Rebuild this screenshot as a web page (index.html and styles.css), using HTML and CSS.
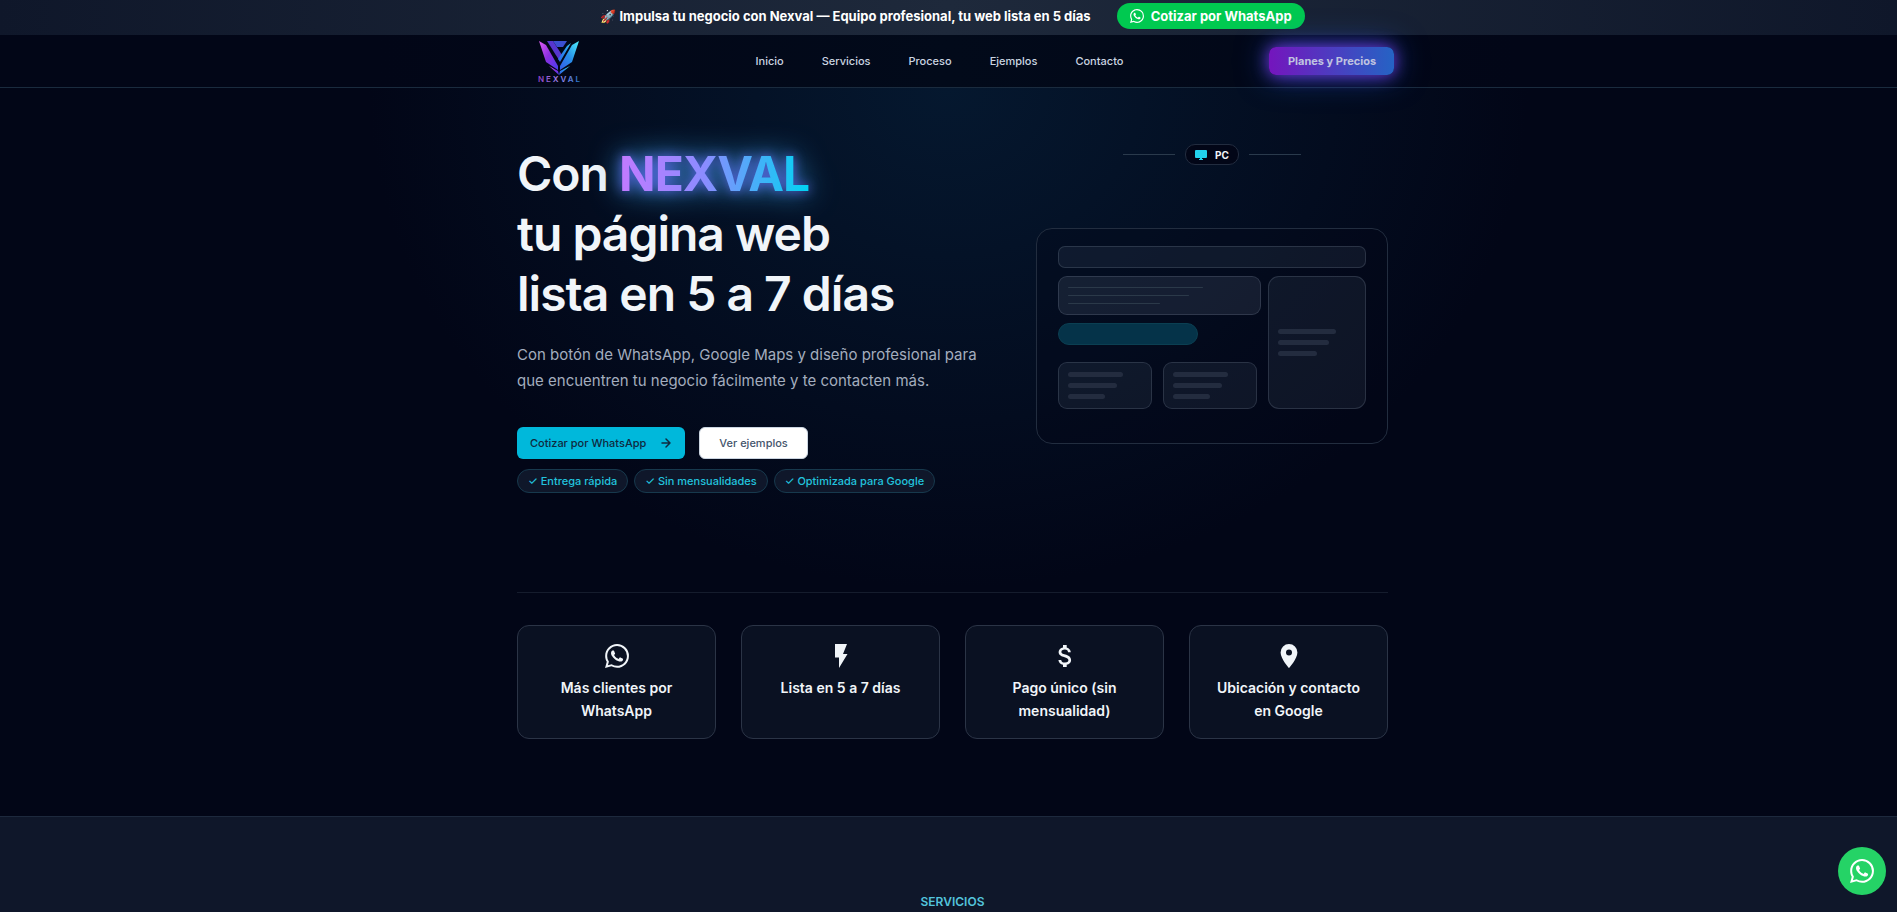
FILE: index.html
```
<!DOCTYPE html>
<html lang="es">
<head>
    <meta charset="UTF-8">
    <meta name="viewport" content="width=device-width, initial-scale=1.0">
    <title>Nexval</title>
    <link rel="stylesheet" href="styles.css">
</head>
<body>
    <svg class="sprite" aria-hidden="true">
        <symbol id="whatsapp" viewBox="0 0 24 24">
            <path d="M17.47 14.38c-.3-.15-1.76-.87-2.03-.97-.27-.1-.47-.15-.67.15-.2.3-.77.97-.94 1.16-.17.2-.35.22-.64.08-.3-.15-1.26-.46-2.39-1.48-.88-.79-1.48-1.76-1.65-2.06-.17-.3-.02-.46.13-.6.13-.14.3-.35.44-.53.15-.17.2-.3.3-.5.1-.2.05-.37-.02-.52-.08-.15-.67-1.61-.92-2.2-.24-.59-.49-.5-.67-.51h-.57c-.2 0-.52.07-.79.37-.27.3-1.04 1.02-1.04 2.48s1.06 2.87 1.21 3.07c.15.2 2.1 3.2 5.08 4.49.71.3 1.26.49 1.69.63.71.22 1.36.19 1.87.12.57-.09 1.76-.72 2.01-1.42.25-.69.25-1.29.17-1.41-.07-.12-.27-.2-.57-.35M12.05 21.79h0a9.87 9.87 0 0 1-5.03-1.38l-.36-.21-3.74.98 1-3.65-.24-.37a9.86 9.86 0 0 1-1.51-5.26c0-5.45 4.44-9.88 9.89-9.88a9.82 9.82 0 0 1 6.99 2.9 9.83 9.83 0 0 1 2.89 6.99c0 5.45-4.44 9.88-9.89 9.88m8.41-18.3A11.82 11.82 0 0 0 12.05 0C5.5 0 .16 5.34.16 11.89c0 2.1.55 4.14 1.59 5.95L.06 24l6.3-1.65a11.88 11.88 0 0 0 5.68 1.45h.01c6.55 0 11.89-5.34 11.89-11.9a11.82 11.82 0 0 0-3.48-8.41Z"/>
        </symbol>
    </svg>

    <div class="topbar">
        <p>🚀 Impulsa tu negocio con Nexval — Equipo profesional, tu web lista en 5 días</p>
        <a href="#contacto" class="topbar-btn"><svg><use href="#whatsapp"/></svg>Cotizar por WhatsApp</a>
    </div>

    <header class="header">
        <div class="header-inner">
            <a href="#inicio" class="logo">
                <svg viewBox="0 0 48 44" role="img" aria-label="Nexval">
                    <defs>
                        <linearGradient id="logo-left" x1="0" y1="0" x2="1" y2="1">
                            <stop offset="0" stop-color="#e05cf5"/>
                            <stop offset="0.5" stop-color="#8b2fe0"/>
                            <stop offset="1" stop-color="#4a3df0"/>
                        </linearGradient>
                        <linearGradient id="logo-right" x1="1" y1="0" x2="0" y2="1">
                            <stop offset="0" stop-color="#4df0fa"/>
                            <stop offset="0.5" stop-color="#2790ea"/>
                            <stop offset="1" stop-color="#3657e8"/>
                        </linearGradient>
                        <linearGradient id="logo-text" x1="0" y1="0" x2="1" y2="0">
                            <stop offset="0" stop-color="#8d3cc0"/>
                            <stop offset="0.5" stop-color="#a18af0"/>
                            <stop offset="1" stop-color="#1576c8"/>
                        </linearGradient>
                    </defs>
                    <path fill="url(#logo-left)" d="M4 2l7 4 12 21v4L11 23z"/>
                    <path fill="#5636cf" d="M12 2h6l9 14-3 5z"/>
                    <path fill="#3b4fd0" d="M18 2h14l-4 6h-6z"/>
                    <path fill="url(#logo-right)" d="M44 2l-7 21-12 8v-4L37 6zM36 4L25 23l-2-3L32 7z"/>
                    <path fill="url(#logo-left)" d="M14 27l9 5 1 4z"/>
                    <path fill="url(#logo-right)" d="M35 27l-10 5-1 4z"/>
                    <text x="25" y="43" text-anchor="middle" class="logo-name" fill="url(#logo-text)">NEXVAL</text>
                </svg>
            </a>
            <nav class="nav">
                <a href="#inicio">Inicio</a>
                <a href="#servicios">Servicios</a>
                <a href="#proceso">Proceso</a>
                <a href="#ejemplos">Ejemplos</a>
                <a href="#contacto">Contacto</a>
            </nav>
            <a href="#planes" class="plans-btn">Planes y Precios</a>
        </div>
    </header>

    <main>
        <section class="hero" id="inicio">
            <div class="container">
                <div class="hero-grid">
                    <div class="hero-copy">
                        <h1>Con <span class="brand">NEXVAL</span><br>tu página web<br>lista en 5 a 7 días</h1>
                        <p class="lead">Con botón de WhatsApp, Google Maps y diseño profesional para que encuentren tu negocio fácilmente y te contacten más.</p>
                        <div class="actions">
                            <a href="#contacto" class="btn btn-primary">Cotizar por WhatsApp
                                <svg viewBox="0 0 12 12"><path d="M2 6h8M6 2l4 4-4 4"/></svg>
                            </a>
                            <a href="#ejemplos" class="btn btn-light">Ver ejemplos</a>
                        </div>
                        <ul class="chips">
                            <li>✓ Entrega rápida</li>
                            <li>✓ Sin mensualidades</li>
                            <li>✓ Optimizada para Google</li>
                        </ul>
                    </div>

                    <div class="preview">
                        <div class="device">
                            <span class="device-pill">
                                <svg viewBox="0 0 12 12"><path d="M1 1h10a1 1 0 0 1 1 1v6a1 1 0 0 1-1 1H7v1h1v1H4v-1h1V9H1a1 1 0 0 1-1-1V2a1 1 0 0 1 1-1z"/></svg>PC
                            </span>
                        </div>
                        <div class="mockup">
                            <div class="box mock-bar"></div>
                            <div class="box mock-banner"><i></i><i></i><i></i></div>
                            <div class="box mock-side"><i></i><i></i><i></i></div>
                            <div class="box mock-cta"></div>
                            <div class="mock-cards">
                                <div class="box"><i></i><i></i><i></i></div>
                                <div class="box"><i></i><i></i><i></i></div>
                            </div>
                        </div>
                    </div>
                </div>

                <ul class="features">
                    <li>
                        <svg viewBox="0 0 24 24"><use href="#whatsapp"/></svg>
                        <h2>Más clientes por WhatsApp</h2>
                    </li>
                    <li>
                        <svg viewBox="0 0 24 24"><path d="M6 0v13.500h4V24l8.500-14H14l4-10z"/></svg>
                        <h2>Lista en 5 a 7 días</h2>
                    </li>
                    <li>
                        <svg viewBox="0 0 24 24"><path d="M12.300 10.600c-2.900-.8-3.900-1.500-3.900-2.700 0-1.400 1.300-2.300 3.400-2.300 2.200 0 3.100 1.100 3.200 2.700h2.800c-.1-2.200-1.400-4.200-4.100-4.900V1H10v2.400c-2.400.5-4.400 2.100-4.400 4.600 0 2.900 2.400 4.300 6 5.200 3.200.8 3.800 1.900 3.800 3.100 0 .9-.6 2.300-3.400 2.300-2.600 0-3.600-1.200-3.800-2.700H5.400c.2 2.800 2.200 4.300 4.600 4.800V23h3.700v-2.300c2.400-.5 4.400-1.900 4.400-4.500 0-3.500-3-4.700-5.800-5.600z"/></svg>
                        <h2>Pago único (sin mensualidad)</h2>
                    </li>
                    <li>
                        <svg viewBox="0 0 24 24"><path fill-rule="evenodd" d="M12 0a8.400 8.400 0 0 0-8.400 8.400C3.600 14.700 12 24 12 24s8.400-9.300 8.400-15.600A8.400 8.400 0 0 0 12 0zm0 11.400a3 3 0 1 1 0-6 3 3 0 0 1 0 6z"/></svg>
                        <h2>Ubicación y contacto en Google</h2>
                    </li>
                </ul>
            </div>
        </section>

        <section class="services" id="servicios">
            <p class="eyebrow">SERVICIOS</p>
        </section>
    </main>

    <a href="#contacto" class="whatsapp-float" aria-label="WhatsApp"><svg><use href="#whatsapp"/></svg></a>
</body>
</html>
```
FILE: styles.css
```
* {
    box-sizing: border-box;
}
html {
    overflow: hidden;
}
body {
    margin: 0;
    font-family: Inter, "Liberation Sans", sans-serif;
    font-size: 12px;
    background-color: #020617;
    color: #f1f5f9;
}
h1, h2, p, ul {
    margin: 0;
    padding: 0;
}
ul {
    list-style: none;
}
a {
    color: inherit;
    text-decoration: none;
}
svg {
    fill: currentColor;
    flex-shrink: 0;
}
.sprite {
    position: absolute;
    width: 0;
    height: 0;
}
.topbar, .header, .hero, .services {
    padding-left: 8px;
}

/* Top bar */
.topbar {
    display: flex;
    align-items: center;
    justify-content: center;
    gap: 26px;
    height: 35px;
    padding-bottom: 3px;
    background: linear-gradient(90deg, #0f172a, #1e293b, #0f172a);
    color: #fff;
    font-size: 13px;
    font-weight: 700;
}
.topbar-btn {
    display: flex;
    align-items: center;
    gap: 7px;
    height: 26px;
    padding: 0 13px;
    border-radius: 13px;
    background-color: #00c950;
}
.topbar-btn svg {
    width: 14px;
    height: 14px;
}

/* Header */
.header {
    position: relative;
    z-index: 1;
    height: 53px;
    border-bottom: 1px solid #1a2b3e;
    background: linear-gradient(90deg, #020617 20%, #020a1a 50%, #020617 80%);
}
.header-inner {
    display: flex;
    justify-content: space-between;
    align-items: center;
    max-width: 884px;
    height: 52px;
    margin: 0 auto;
}
.logo {
    padding: 0 27px 0 24px;
}
.logo svg {
    display: block;
    width: 48px;
    height: 44px;
}
.logo-name {
    font-size: 8px;
    font-weight: 600;
    letter-spacing: 2px;
}
.nav {
    display: flex;
    gap: 38px;
    color: #cbd5e1;
    font-size: 11px;
    font-weight: 500;
}
.plans-btn {
    width: 125px;
    height: 28px;
    border-radius: 7px;
    background: linear-gradient(90deg, #7415bd, #2563c4);
    box-shadow: 0 0 16px rgba(124, 58, 237, 0.9), 0 0 32px rgba(37, 99, 235, 0.6);
    color: #c0c4e0;
    font-size: 11px;
    font-weight: 700;
    line-height: 28px;
    text-align: center;
}

/* Hero */
.container {
    max-width: 871px;
    margin: 0 auto;
}
.hero {
    height: 728px;
    background: radial-gradient(580px 500px at 50% 0, #05182f, #020617);
}
.hero-grid {
    display: grid;
    grid-template-columns: 1fr 352px;
    gap: 44px;
    height: 505px;
    padding-top: 56px;
    border-bottom: 1px solid #151c2d;
}
h1 {
    font-size: 48px;
    font-weight: 600;
    line-height: 60px;
    letter-spacing: -1px;
}
.brand {
    background: linear-gradient(90deg, #c27aff, #8b8cff 45%, #00d3f2);
    -webkit-background-clip: text;
    background-clip: text;
    color: transparent;
    font-weight: 700;
    filter: drop-shadow(0 0 6px rgba(99, 102, 241, 0.9)) drop-shadow(0 0 14px rgba(56, 170, 240, 0.8));
}
.lead {
    margin-top: 18px;
    color: #a3adbe;
    font-size: 15px;
    line-height: 26px;
}
.actions {
    display: flex;
    gap: 14px;
    margin-top: 33px;
}
.btn {
    display: flex;
    align-items: center;
    height: 32px;
    padding: 0 13px;
    border-radius: 6px;
    font-size: 11px;
    font-weight: 500;
}
.btn-primary {
    gap: 14px;
    background-color: #00b8db;
    color: #0f2a40;
}
.btn-primary svg {
    width: 12px;
    height: 12px;
    fill: none;
    stroke: currentColor;
    stroke-width: 1.5;
    stroke-linecap: round;
    stroke-linejoin: round;
}
.btn-light {
    padding: 0 19px;
    border: 1px solid #cbd5e1;
    background-color: #fff;
    color: #45556c;
}
.chips {
    display: flex;
    gap: 6px;
    margin-top: 10px;
}
.chips li {
    padding: 0 10px;
    border: 1px solid #17394d;
    border-radius: 12px;
    background-color: #0f172a;
    color: #22c3de;
    font-size: 11px;
    font-weight: 500;
    line-height: 22px;
}

/* Page mockup */
.device {
    display: flex;
    align-items: center;
    justify-content: center;
    gap: 10px;
}
.device::before, .device::after {
    content: "";
    width: 52px;
    height: 1px;
    background-color: #2a3a4c;
}
.device-pill {
    display: flex;
    align-items: center;
    gap: 8px;
    height: 21px;
    padding: 0 9px;
    border: 1px solid #222c3f;
    border-radius: 10px;
    background-color: #020617;
    font-size: 10px;
    font-weight: 700;
}
.device-pill svg {
    width: 12px;
    height: 12px;
    color: #22d3ee;
}
.mockup {
    display: grid;
    grid-template-columns: 203px 98px;
    grid-template-rows: 22px 39px 22px 56px;
    gap: 8px 7px;
    margin-top: 63px;
    padding: 17px 21px 34px;
    border: 1px solid #222d3f;
    border-radius: 16px;
    background-color: rgba(2, 6, 23, 0.3);
}
.box {
    border: 1px solid rgba(148, 163, 184, 0.2);
    border-radius: 9px;
    background-color: rgba(148, 163, 184, 0.09);
}
.box i {
    display: block;
    width: 74%;
    height: 5px;
    border-radius: 3px;
    background-color: #232c3f;
}
.box i:nth-child(2) {
    width: 66%;
}
.box i:nth-child(3) {
    width: 50%;
}
.mock-bar {
    grid-column: 1 / 3;
    border-radius: 7px;
}
.mock-banner, .mock-side, .mock-cards .box {
    display: flex;
    flex-direction: column;
    justify-content: center;
    gap: 6px;
    padding: 0 9px;
}
.mock-banner {
    gap: 7px;
    background-color: rgba(148, 163, 184, 0.13);
}
.mock-banner i {
    height: 1px;
    background-color: #2b3949;
}
.mock-side {
    grid-column: 2;
    grid-row: 2 / 5;
    border-radius: 11px;
}
.mock-cta {
    width: 140px;
    border-color: #0b3f52;
    border-radius: 11px;
    background-color: #053349;
}
.mock-cards {
    display: grid;
    grid-template-columns: 94px 94px;
    gap: 11px;
    padding-top: 9px;
}

.box.mock-banner i {
    height: 1px;
}

/* Features */
.features {
    display: grid;
    grid-template-columns: repeat(4, 1fr);
    gap: 25px;
    margin-top: 32px;
}
.features li {
    height: 114px;
    padding: 18px 20px 0;
    border: 1px solid #2b3446;
    border-radius: 12px;
    background-color: #0a1122;
    text-align: center;
}
.features svg {
    display: block;
    width: 24px;
    height: 24px;
    margin: 0 auto 8px;
}
.features h2 {
    font-size: 14px;
    font-weight: 600;
    line-height: 23px;
}

/* Services */
.services {
    min-height: 96px;
    padding-top: 76px;
    border-top: 1px solid #1d293d;
    background-color: #0f172a;
}
.eyebrow {
    color: #53c4dc;
    font-size: 12px;
    font-weight: 600;
    line-height: 18px;
    text-align: center;
}

.whatsapp-float {
    position: fixed;
    right: 11px;
    bottom: 17px;
    display: flex;
    align-items: center;
    justify-content: center;
    width: 48px;
    height: 48px;
    border-radius: 50%;
    background-color: #25d366;
    color: #fff;
}
.whatsapp-float svg {
    width: 24px;
    height: 24px;
}
```
